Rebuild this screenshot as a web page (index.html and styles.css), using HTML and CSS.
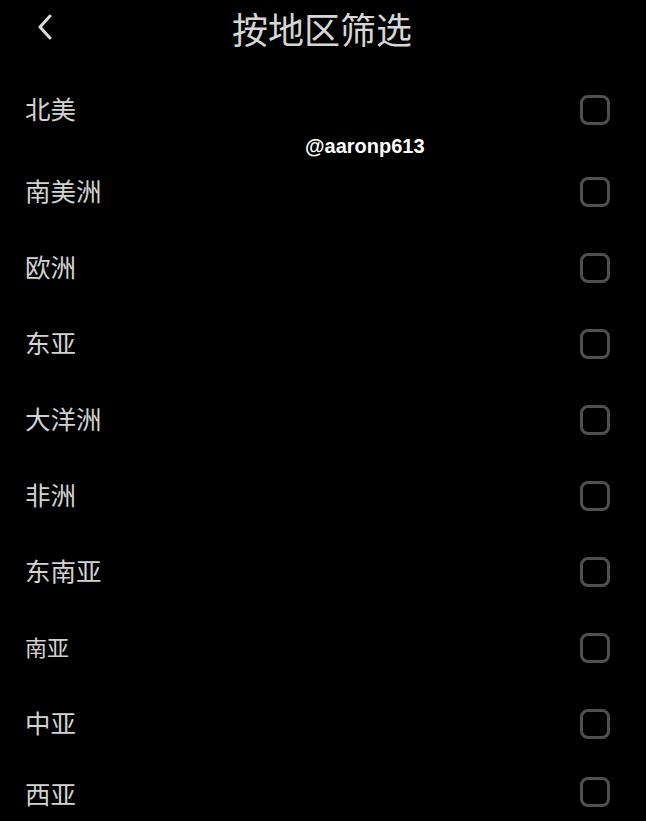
FILE: index.html
```html
<!DOCTYPE html>
<html lang="zh-CN">
<head>
  <meta charset="UTF-8">
  <meta name="viewport" content="width=device-width, initial-scale=1.0">
  <title>按地区筛选</title>
  <link rel="stylesheet" href="styles.css">
</head>
<body>
  <div class="header">
    <a href="#" class="back">
      <svg width="18" height="26" viewBox="0 0 18 26">
        <path d="M14 2 L4 13 L14 24" fill="none" stroke="#dcdcdc" stroke-width="3" stroke-linecap="round" stroke-linejoin="round"/>
      </svg>
    </a>
    <h1>按地区筛选</h1>
  </div>

  <ul class="region-list">
    <li class="region first"><span class="name">北美</span><span class="check"></span></li>
    <li class="region"><span class="name">南美洲</span><span class="check"></span></li>
    <li class="region"><span class="name">欧洲</span><span class="check"></span></li>
    <li class="region"><span class="name">东亚</span><span class="check"></span></li>
    <li class="region"><span class="name">大洋洲</span><span class="check"></span></li>
    <li class="region"><span class="name">非洲</span><span class="check"></span></li>
    <li class="region"><span class="name">东南亚</span><span class="check"></span></li>
    <li class="region small"><span class="name">南亚</span><span class="check"></span></li>
    <li class="region"><span class="name">中亚</span><span class="check"></span></li>
    <li class="region last"><span class="name">西亚</span><span class="check"></span></li>
  </ul>

  <div class="watermark">@aaronp613</div>
</body>
</html>
```

FILE: styles.css
```css
body {
  margin: 0;
  padding: 0;
  background-color: #000;
  color: #d2d2d2;
  font-family: "Noto Sans CJK SC", "Liberation Sans", sans-serif;
  height: 821px;
  overflow: hidden;
  position: relative;
}

.header {
  height: 56px;
  display: flex;
  align-items: center;
  justify-content: center;
  position: relative;
}

.header h1 {
  margin: 0 0 0 -2px;
  font-size: 36px;
  font-weight: 400;
  color: #d6d6d6;
  line-height: 1;
}

.back {
  position: absolute;
  left: 36px;
  top: 14px;
  display: block;
  line-height: 0;
}

.region-list {
  list-style: none;
  margin: 0;
  padding: 16px 0 0;
}

.region {
  height: 76px;
  display: flex;
  align-items: center;
  justify-content: space-between;
  padding: 0 36px 0 25px;
  font-size: 25.5px;
}

.region .name {
  padding-bottom: 5px;
}

.region.first {
  margin-bottom: 6px;
}

.region.small {
  font-size: 22px;
}

.region.last {
  height: 60px;
}

.region.last .name {
  padding-bottom: 0;
}

.check {
  width: 24px;
  height: 24px;
  border: 3px solid #4f4f4f;
  border-radius: 8px;
}

.watermark {
  position: absolute;
  left: 305px;
  top: 135px;
  font-family: "Liberation Sans", Arial, sans-serif;
  font-weight: bold;
  font-size: 20px;
  color: #fff;
}
```
